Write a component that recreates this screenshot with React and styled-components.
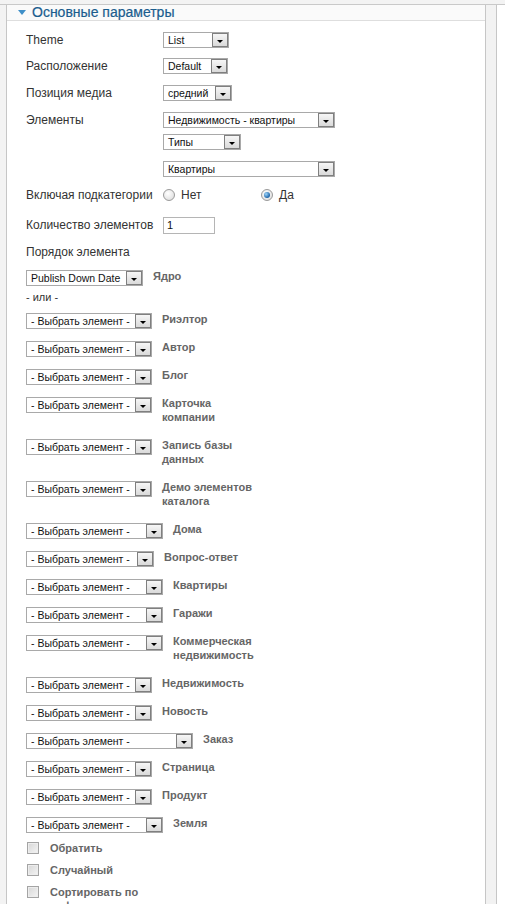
import React from "react";
import styled, { createGlobalStyle } from "styled-components";

const GlobalStyle = createGlobalStyle`
  html, body {
    margin: 0;
    padding: 0;
    background: #fff;
  }
  body {
    font-family: "Liberation Sans", Arial, sans-serif;
  }
`;

const elementRows = [
  { label: ["Риэлтор"], w: 126 },
  { label: ["Автор"], w: 126 },
  { label: ["Блог"], w: 126 },
  { label: ["Карточка", "компании"], w: 126 },
  { label: ["Запись базы", "данных"], w: 126 },
  { label: ["Демо элементов", "каталога"], w: 126 },
  { label: ["Дома"], w: 137 },
  { label: ["Вопрос-ответ"], w: 128 },
  { label: ["Квартиры"], w: 137 },
  { label: ["Гаражи"], w: 137 },
  { label: ["Коммерческая", "недвижимость"], w: 137 },
  { label: ["Недвижимость"], w: 126 },
  { label: ["Новость"], w: 126 },
  { label: ["Заказ"], w: 167 },
  { label: ["Страница"], w: 126 },
  { label: ["Продукт"], w: 126 },
  { label: ["Земля"], w: 137 },
];

const checks = [["Обратить"], ["Случайный"], ["Сортировать по", "алфавиту"]];

function Select({ value, width }) {
  return (
    <SelectBox $w={width}>
      <SelectText>{value}</SelectText>
      <DropButton />
    </SelectBox>
  );
}

function App() {
  return (
    <Page>
      <GlobalStyle />
      <TopStrip />
      <Body>
        <Gutter />
        <Panel>
          <Header>
            <svg width="8" height="5" viewBox="0 0 8 5">
              <path d="M0 0 L8 0 L4 5 Z" fill="#3f8fc8" />
            </svg>
            <Title>Основные параметры</Title>
          </Header>
          <Content>
            <ParamRow $mt={11}>
              <Key>Theme</Key>
              <Value>
                <Select value="List" width={66} />
              </Value>
            </ParamRow>
            <ParamRow $mt={10}>
              <Key>Расположение</Key>
              <Value>
                <Select value="Default" width={65} />
              </Value>
            </ParamRow>
            <ParamRow $mt={11}>
              <Key>Позиция медиа</Key>
              <Value>
                <Select value="средний" width={69} />
              </Value>
            </ParamRow>
            <ParamRow $mt={11}>
              <Key>Элементы</Key>
              <Value>
                <Select value="Недвижимость - квартиры" width={172} />
                <Stack $mt={6}>
                  <Select value="Типы" width={78} />
                </Stack>
                <Stack $mt={11}>
                  <Select value="Квартиры" width={172} />
                </Stack>
              </Value>
            </ParamRow>
            <ParamRow $mt={10}>
              <Key>Включая подкатегории</Key>
              <Value>
                <RadioGroup>
                  <RadioOption $w={98}>
                    <Radio />
                    <span>Нет</span>
                  </RadioOption>
                  <RadioOption>
                    <Radio $checked />
                    <span>Да</span>
                  </RadioOption>
                </RadioGroup>
              </Value>
            </ParamRow>
            <ParamRow $mt={14}>
              <Key>Количество элементов</Key>
              <Value>
                <TextField>1</TextField>
              </Value>
            </ParamRow>
            <ParamRow $mt={10}>
              <Key>Порядок элемента</Key>
            </ParamRow>
            <InlineRow $mt={9}>
              <Select value="Publish Down Date" width={117} />
              <BoldLabel>Ядро</BoldLabel>
            </InlineRow>
            <OrText>- или -</OrText>
            <ElementList>
              {elementRows.map((row, i) => (
                <InlineRow key={i} $mt={i === 0 ? 8 : 11}>
                  <Select value="- Выбрать элемент -" width={row.w} />
                  <BoldLabel>
                    {row.label.map((line, j) => (
                      <div key={j}>{line}</div>
                    ))}
                  </BoldLabel>
                </InlineRow>
              ))}
            </ElementList>
            <CheckList>
              {checks.map((lines, i) => (
                <CheckRow key={i}>
                  <CheckBox />
                  <BoldLabel $plain>
                    {lines.map((line, j) => (
                      <div key={j}>{line}</div>
                    ))}
                  </BoldLabel>
                </CheckRow>
              ))}
            </CheckList>
          </Content>
        </Panel>
        <SideRail />
        <Margin />
      </Body>
    </Page>
  );
}

export default App;

const Page = styled.div`
  width: 505px;
  height: 904px;
  overflow: hidden;
  display: flex;
  flex-direction: column;
`;

const TopStrip = styled.div`
  height: 4px;
  flex: none;
  background: #f3f3f3;
  border-bottom: 1px solid #c9c9c9;
`;

const Body = styled.div`
  flex: 1;
  display: flex;
  min-height: 0;
`;

const Gutter = styled.div`
  width: 6px;
  flex: none;
  background: #f3f3f3;
`;

const Panel = styled.div`
  width: 478px;
  flex: none;
  background: #fff;
  border-left: 1px solid #c6c6c6;
  border-right: 1px solid #c6c6c6;
  display: flex;
  flex-direction: column;
`;

const SideRail = styled.div`
  width: 10px;
  flex: none;
  background: #f2f2f2;
  border-right: 1px solid #c6c6c6;
`;

const Margin = styled.div`
  flex: 1;
  background: #fff;
`;

const Header = styled.div`
  height: 15px;
  flex: none;
  background: #fafafa;
  border-bottom: 1px solid #dedede;
  display: flex;
  align-items: center;
  padding-left: 11px;
  gap: 6px;
  overflow: hidden;
  svg {
    flex: none;
    margin-top: -1px;
  }
`;

const Title = styled.span`
  font-size: 14px;
  line-height: 14px;
  color: #1b5d8e;
  white-space: nowrap;
  margin-top: -2px;
  -webkit-text-stroke: 0.2px #1b5d8e;
`;

const Content = styled.div`
  padding-left: 19px;
  display: flex;
  flex-direction: column;
`;

const ParamRow = styled.div`
  display: grid;
  grid-template-columns: 137px 1fr;
  margin-top: ${(p) => p.$mt}px;
`;

const Key = styled.div`
  font-size: 12px;
  line-height: 16px;
  color: #333;
  white-space: nowrap;
`;

const Value = styled.div`
  display: flex;
  flex-direction: column;
  align-items: flex-start;
`;

const Stack = styled.div`
  margin-top: ${(p) => p.$mt}px;
`;

const SelectBox = styled.div`
  width: ${(p) => p.$w}px;
  height: 16px;
  box-sizing: border-box;
  border: 1px solid #a9a9a9;
  background: #fff;
  display: flex;
  align-items: center;
  flex: none;
`;

const SelectText = styled.span`
  flex: 1;
  padding-left: 4px;
  font-size: 10.5px;
  color: #111;
  white-space: nowrap;
  overflow: hidden;
`;

const DropButton = styled.span`
  width: 16px;
  height: 14px;
  box-sizing: border-box;
  border: 1px solid #7f7f7f;
  background: linear-gradient(#f6f6f6, #dadada);
  display: flex;
  align-items: flex-end;
  justify-content: center;
  padding-bottom: 3px;
  flex: none;
  &::after {
    content: "";
    border-left: 3px solid transparent;
    border-right: 3px solid transparent;
    border-top: 3px solid #000;
  }
`;

const RadioGroup = styled.div`
  display: flex;
  align-items: center;
  height: 16px;
`;

const RadioOption = styled.label`
  display: flex;
  align-items: center;
  gap: 6px;
  width: ${(p) => (p.$w ? `${p.$w}px` : "auto")};
  font-size: 12px;
  color: #333;
`;

const Radio = styled.span`
  width: 12px;
  height: 12px;
  box-sizing: border-box;
  border-radius: 50%;
  border: 1px solid #9a9a9a;
  background: radial-gradient(circle at 40% 35%, #fff, #d8d8d8);
  display: flex;
  align-items: center;
  justify-content: center;
  &::after {
    content: "";
    display: ${(p) => (p.$checked ? "block" : "none")};
    width: 6px;
    height: 6px;
    border-radius: 50%;
    background: radial-gradient(circle at 35% 35%, #9fd6fa, #1d64a8 70%);
  }
`;

const TextField = styled.div`
  width: 52px;
  height: 17px;
  box-sizing: border-box;
  border: 1px solid #b5b5b5;
  font-size: 11px;
  line-height: 15px;
  padding-left: 3px;
  color: #111;
`;

const InlineRow = styled.div`
  display: flex;
  align-items: flex-start;
  gap: 10px;
  margin-top: ${(p) => p.$mt}px;
  ${SelectBox} {
    margin-top: 1px;
  }
`;

const BoldLabel = styled.div`
  font-size: 11px;
  font-weight: bold;
  line-height: 14px;
  padding-bottom: ${(p) => (p.$plain ? 0 : 3)}px;
  color: #666;
  white-space: nowrap;
`;

const OrText = styled.div`
  font-size: 11px;
  line-height: 14px;
  color: #333;
  margin-top: 4px;
`;

const ElementList = styled.div`
  display: flex;
  flex-direction: column;
`;

const CheckBox = styled.span`
  width: 12px;
  height: 12px;
  box-sizing: border-box;
  border: 1px solid #a4a4a4;
  background: linear-gradient(135deg, #d6d6d6, #f4f4f4);
  box-shadow: inset 0 0 0 1px #ededed;
  flex: none;
`;

const CheckList = styled.div`
  display: flex;
  flex-direction: column;
  margin-top: 8px;
  gap: 8px;
`;

const CheckRow = styled.div`
  display: flex;
  align-items: flex-start;
  gap: 11px;
  padding-left: 1px;
  ${CheckBox} {
    margin-top: 1px;
  }
`;
